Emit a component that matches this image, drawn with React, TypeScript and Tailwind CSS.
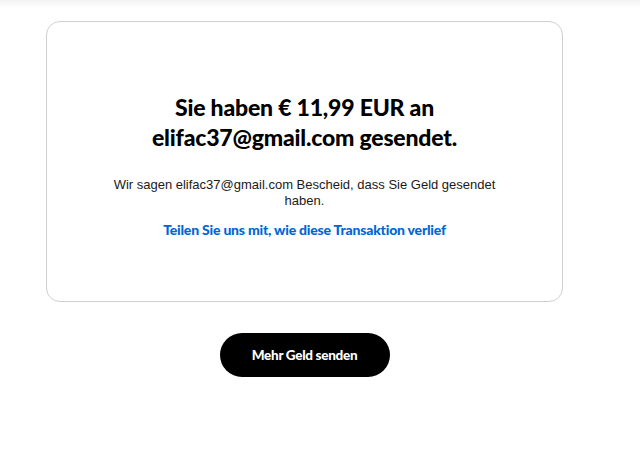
export default function App() {
  return (
    <div className="min-h-[472px] w-[640px] bg-white">
      <div className="h-[8px] bg-gradient-to-b from-[#f3f3f3] to-white" />
      <div className="flex flex-col items-center pl-[46px] pr-[77px] pt-[13px]">
        <div className="flex h-[281px] w-[517px] flex-col items-center rounded-[14px] border border-[#cfcfcf] pt-[70px]">
          <h1 className="w-[440px] text-center text-[23px] font-black leading-[30px] tracking-[-0.2px] text-black [font-family:Lato,'Noto_Sans',sans-serif]">
            Sie haben € 11,99 EUR an elifac37@gmail.com gesendet.
          </h1>
          <p className="mt-[25px] w-[400px] text-center text-[13px] leading-[16px] text-[#1a1a1a] [font-family:'Liberation_Sans',Arial,sans-serif]">
            Wir sagen elifac37@gmail.com Bescheid, dass Sie Geld gesendet haben.
          </p>
          <a
            href="#"
            className="mt-[12px] text-[14px] font-black leading-[18px] tracking-[-0.2px] text-[#0066d6] [font-family:Lato,'Noto_Sans',sans-serif]"
          >
            Teilen Sie uns mit, wie diese Transaktion verlief
          </a>
        </div>
        <button className="mt-[31px] h-[44px] w-[170px] rounded-full bg-black text-[13.5px] font-black tracking-[-0.3px] text-white [font-family:Lato,'Noto_Sans',sans-serif]">
          Mehr Geld senden
        </button>
      </div>
    </div>
  );
}
